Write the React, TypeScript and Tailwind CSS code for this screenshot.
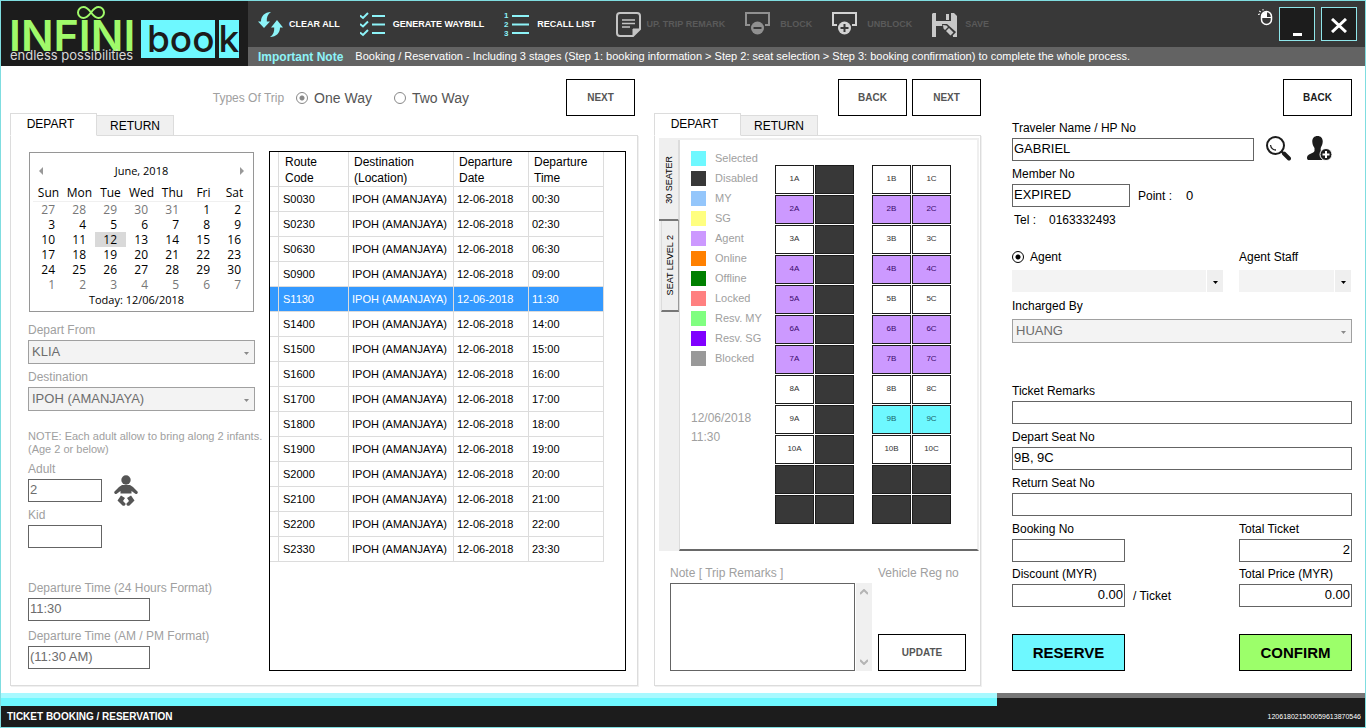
import { useState } from "react";
import type { ReactNode } from "react";
import clsx from "clsx";

const routes = [
  ["S0030", "00:30"],
  ["S0230", "02:30"],
  ["S0630", "06:30"],
  ["S0900", "09:00"],
  ["S1130", "11:30"],
  ["S1400", "14:00"],
  ["S1500", "15:00"],
  ["S1600", "16:00"],
  ["S1700", "17:00"],
  ["S1800", "18:00"],
  ["S1900", "19:00"],
  ["S2000", "20:00"],
  ["S2100", "21:00"],
  ["S2200", "22:00"],
  ["S2330", "23:30"],
];

const legend = [
  { label: "Selected", color: "bg-[#6ef8ff]" },
  { label: "Disabled", color: "bg-[#383838]" },
  { label: "MY", color: "bg-[#94c6fb]" },
  { label: "SG", color: "bg-[#ffff80]" },
  { label: "Agent", color: "bg-[#cc99ff]" },
  { label: "Online", color: "bg-[#ff8000]" },
  { label: "Offline", color: "bg-[#008000]" },
  { label: "Locked", color: "bg-[#ff8080]" },
  { label: "Resv. MY", color: "bg-[#80ff80]" },
  { label: "Resv. SG", color: "bg-[#8000ff]" },
  { label: "Blocked", color: "bg-[#999999]" },
];

const weekDays = ["Sun", "Mon", "Tue", "Wed", "Thu", "Fri", "Sat"];
const weeks = [
  [27, 28, 29, 30, 31, 1, 2],
  [3, 4, 5, 6, 7, 8, 9],
  [10, 11, 12, 13, 14, 15, 16],
  [17, 18, 19, 20, 21, 22, 23],
  [24, 25, 26, 27, 28, 29, 30],
  [1, 2, 3, 4, 5, 6, 7],
];

const agentRows = [2, 4, 6, 7];
const agentSeats = ["5A"];

/* ---------- icons ---------- */

function RefreshIcon() {
  return (
    <svg width="25" height="25" viewBox="0 0 25 25" fill="#8df3f8">
      <path d="M13 0C6.500 0.300 3 4 3 9.500H0l6 6.500 6-6.500H8.800C8.500 5.500 9.700 2 13 0z" />
      <path d="M12 25c6.500-.3 10-4 10-9.500h3L19 8l-6 7.500h3.200C16.500 19.500 15.300 23 12 25z" />
    </svg>
  );
}

function CheckListIcon() {
  return (
    <svg width="25" height="25" viewBox="0 0 25 25" fill="none" stroke="#8df3f8" strokeWidth="2">
      <path d="M0 3.500l3 2.500L8 1M0 12l3 2.500L8 9.500M0 20.500l3 2.500L8 18" />
      <path d="M12 4h13M12 12.500h13M12 21h13" />
    </svg>
  );
}

function NumberListIcon() {
  return (
    <svg width="25" height="25" viewBox="0 0 25 25">
      <path d="M8 4h17M8 12.500h17M8 21h17" stroke="#8df3f8" strokeWidth="2" />
      <g fill="#8df3f8" fontFamily="Liberation Sans" fontSize="8" fontWeight="700">
        <text x="0" y="6">1</text>
        <text x="0" y="15">2</text>
        <text x="0" y="24">3</text>
      </g>
    </svg>
  );
}

function NoteIcon() {
  return (
    <svg width="25" height="25" viewBox="0 0 25 25" fill="none" stroke="#c4c4c4" strokeWidth="2">
      <path d="M4 1h17a3 3 0 0 1 3 3v13l-7 7H4a3 3 0 0 1-3-3V4a3 3 0 0 1 3-3z" />
      <path d="M17 24v-7h7z" fill="#c4c4c4" strokeWidth="1" />
      <path d="M6 8h13M6 11.500h13M6 15h8" strokeWidth="1.500" />
    </svg>
  );
}

function SeatIcon({ plus }: { plus?: boolean }) {
  const color = plus ? "#d2d2d2" : "#909090";
  return (
    <svg width="25" height="25" viewBox="0 0 25 25" fill="none">
      <path d="M5 13H1V1h23v12h-4" stroke={color} strokeWidth="2" />
      <circle cx="12.500" cy="16" r="6.500" fill={color} />
      <path d={plus ? "M8.500 16h8M12.500 12v8" : "M8.500 16h8"} stroke="#383838" strokeWidth="2" />
    </svg>
  );
}

function SaveIcon() {
  return (
    <svg width="25" height="25" viewBox="0 0 25 25">
      <path d="M1 1h21l3 3v21H0V2z" fill="#c8c8c8" />
      <path d="M4 1h15v8H4zM4 14h9l8 8v3H4z" fill="#383838" />
      <path d="M14 2h3v6h-3z" fill="#c8c8c8" />
      <path d="M10 12l5 0 9 8-4 5-9-8z" fill="#383838" />
      <path d="M11 13l3.500.5 1.500 1.500-3 3-1.500-1.500zM17 16l4.500 4.500-3 3L14 19zM22.500 21.500l1 3-3-.5z" fill="#c8c8c8" />
    </svg>
  );
}

function MouseIcon() {
  return (
    <svg width="15" height="17" viewBox="0 0 15 17" fill="none" stroke="#fff">
      <rect x="3.500" y="2.500" width="10" height="13" rx="5" strokeWidth="1.500" />
      <path d="M3.500 8.500h10M8.500 2.500v6" />
      <path d="M4 8V6a4 4 0 0 1 4-3v5z" fill="#fff" stroke="none" />
      <path d="M0 5.500l2-.5M1 2l2 1M5 0v1.500" />
    </svg>
  );
}

function BabyIcon() {
  return (
    <svg width="24" height="31" viewBox="0 0 24 31" fill="#555">
      <circle cx="12" cy="5" r="4.700" />
      <path d="M8 10h8l3 2 4.500 4.500c1 1.500-.8 3.200-2.200 2.200L17.500 16v2.500h-11V16L2.700 18.700C1.300 19.700-.5 18 .5 16.500L5 12z" />
      <path d="M7 20.500l4 2.500-2 3 2.500 2.500c.4 1.800-1.500 3-3 2L3.500 25.500z" />
      <path d="M17 20.500l-4 2.500 2 3-2.500 2.500c-.4 1.800 1.500 3 3 2l5-5z" />
    </svg>
  );
}

function SearchIcon() {
  return (
    <svg width="25" height="25" viewBox="0 0 25 25" fill="none" stroke="#1c1c1c">
      <circle cx="9.500" cy="9.500" r="8.500" strokeWidth="2" />
      <path d="M4.500 9c.5 3 2.500 5 5.500 5" strokeWidth="1.300" />
      <path d="M15.500 15.500l2.500 2.500" strokeWidth="2" />
      <path d="M18 17.500l5 5" strokeWidth="4" strokeLinecap="round" />
    </svg>
  );
}

function AddUserIcon() {
  return (
    <svg width="25" height="25" viewBox="0 0 25 25" fill="#1c1c1c">
      <path d="M10.500 0c3.500 0 5.500 2.500 5.200 6-.2 3-1.400 4.500-2 6v3c1 1.500 5 2 5 5v4H1c-1.500-1-1.500-4 1-5.500 3-1.500 5-1.800 5.500-3.500v-3C6.500 10.500 5.500 9 5.300 6 5 2.500 7 0 10.500 0z" />
      <circle cx="19" cy="18.500" r="6" stroke="#fff" strokeWidth="1" />
      <path d="M15.500 18.500h7M19 15v7" stroke="#fff" strokeWidth="2" />
    </svg>
  );
}

/* ---------- small shared parts ---------- */

function ToolButton({ icon, label, disabled, className = "gap-2" }: { icon: ReactNode; label: string; disabled?: boolean; className?: string }) {
  return (
    <button
      disabled={disabled}
      className={clsx(
        "flex items-center whitespace-nowrap text-[9px] font-bold",
        disabled ? "text-[#5a5a5a]" : "text-white",
        className
      )}
    >
      {icon}
      {label}
    </button>
  );
}

function NavButton({ children, dark }: { children: ReactNode; dark?: boolean }) {
  return (
    <button
      className={clsx(
        "h-[37px] w-[69px] border border-black bg-white text-[10px] font-bold",
        dark ? "text-[#1c1c1c]" : "text-[#555]"
      )}
    >
      {children}
    </button>
  );
}

function Tabs() {
  const [tab, setTab] = useState("DEPART");
  return (
    <div role="tablist" className="relative z-10 -mt-[3px] -mb-px flex items-end text-xs">
      {["DEPART", "RETURN"].map((name) => (
        <button
          key={name}
          role="tab"
          aria-selected={tab === name}
          onClick={() => setTab(name)}
          className={clsx(
            "border border-[#dcdcdc]",
            tab === name ? "h-[23px] w-[87px] border-b-white bg-white pb-0.5 pr-1.5" : "h-[21px] w-[77px] border-l-0 bg-[#f0f0f0]"
          )}
        >
          {name}
        </button>
      ))}
    </div>
  );
}

type FieldProps = {
  id: string;
  label: string;
  value?: string;
  right?: boolean;
  muted?: boolean;
  className?: string;
};

function Field({ id, label, value = "", right, muted, className }: FieldProps) {
  return (
    <div className={clsx("flex flex-col", className)}>
      <label htmlFor={id} className={clsx("mb-0.5 whitespace-nowrap leading-4", muted && "text-[#a0a0a0]")}>
        {label}
      </label>
      <input
        id={id}
        defaultValue={value}
        className={clsx(
          "h-[23px] w-full border border-[#646464] bg-white px-px pb-0.5 text-[13px]",
          right && "text-right",
          muted && "text-[#6d6d6d]"
        )}
      />
    </div>
  );
}

function Arrow({ className }: { className?: string }) {
  return (
    <svg width="5" height="3" viewBox="0 0 5 3" className={clsx("pointer-events-none absolute top-1/2", className)}>
      <path d="M0 0h5L2.500 3z" fill="currentColor" />
    </svg>
  );
}

// greyed out drop-down with a frame
function DisabledSelect({ id, label, value, className }: { id: string; label: ReactNode; value: string; className?: string }) {
  return (
    <div className={clsx("flex flex-col", className)}>
      <label htmlFor={id} className="leading-4">{label}</label>
      <div className="relative">
        <select
          id={id}
          disabled
          className="block h-6 w-full appearance-none border border-[#a0a0a0] bg-[#f3f3f3] px-[3px] text-[13px] text-[#6d6d6d] opacity-100"
        >
          <option>{value}</option>
        </select>
        <Arrow className="right-1.5 text-[#8a8a8a]" />
      </div>
    </div>
  );
}

function FlatSelect({ id }: { id: string }) {
  return (
    <div className="relative flex">
      <select id={id} className="h-[22px] w-full appearance-none bg-[#f3f3f3] text-[13px]">
        <option></option>
      </select>
      <span className="pointer-events-none absolute inset-y-0 right-0 w-[17px] border-l border-white bg-[#efefef]" />
      <Arrow className="right-[5px] text-black" />
    </div>
  );
}

const radioClass =
  "size-3 shrink-0 appearance-none rounded-full border border-current checked:bg-[radial-gradient(circle,currentColor_0_2px,transparent_3px)]";

/* ---------- page sections ---------- */

function Logo() {
  return (
    <div className="relative flex h-[65px] w-[247px] shrink-0 items-start bg-[#1c1c1c] pl-2 pt-[19px]">
      <svg width="28" height="13" viewBox="0 0 28 13" className="absolute left-[76px] top-[5px]" fill="none" stroke="#a0fa6a" strokeWidth="2">
        <path d="M14 6.500C11 2.500 9 1 6.500 1a5.500 5.500 0 0 0 0 11C9 12 11 10.500 14 6.500S19 1 21.500 1a5.500 5.500 0 0 1 0 11C19 12 17 10.500 14 6.500z" />
      </svg>
      <div className="w-[132px] whitespace-nowrap font-[Inter]">
        <div className="h-[30px] text-[43px] font-semibold leading-[30px] text-[#a0fa6a]">INFINI</div>
        <div className="pl-px text-[13px] leading-[10px] text-[#d8d8d8]">endless possibilities</div>
      </div>
      <div className="flex gap-1 font-[Inter] text-[37px] leading-[38px] text-[#1c1c1c]">
        <span className="h-[38px] bg-[#6ef8ff] pl-1.5 font-medium">boo</span>
        <span className="h-[38px] bg-[#6ef8ff] font-medium">k</span>
      </div>
    </div>
  );
}

function Header() {
  return (
    <header className="flex bg-[#383838]">
      <Logo />
      <div className="flex min-w-0 flex-1 flex-col">
        <div className="flex h-[46px] justify-between pr-2">
          <div className="flex items-center gap-5 pl-2.5">
            <ToolButton icon={<RefreshIcon />} label="CLEAR ALL" className="gap-1.5" />
            <ToolButton icon={<CheckListIcon />} label="GENERATE WAYBILL" />
            <ToolButton icon={<NumberListIcon />} label="RECALL LIST" />
            <ToolButton icon={<NoteIcon />} label="UP. TRIP REMARK" disabled className="gap-1.5" />
            <ToolButton icon={<SeatIcon />} label="BLOCK" disabled className="gap-2.5" />
            <ToolButton icon={<SeatIcon plus />} label="UNBLOCK" disabled className="gap-2.5" />
            <ToolButton icon={<SaveIcon />} label="SAVE" disabled />
          </div>
          <div className="flex gap-1.5 pt-1.5">
            <div className="pt-0.5"><MouseIcon /></div>
            <button aria-label="Minimize" className="flex h-[34px] w-9 items-end justify-center border border-[#8fe6ea] bg-[#1c1c1c] pb-1">
              <span className="h-[3px] w-[9px] bg-white" />
            </button>
            <button aria-label="Close" className="flex h-[34px] w-9 items-end justify-center border border-[#8fe6ea] bg-[#1c1c1c] pb-[7px]">
              <svg width="16" height="15" viewBox="0 0 16 15" stroke="#fff" strokeWidth="3">
                <path d="M1 1l14 13M15 1L1 14" />
              </svg>
            </button>
          </div>
        </div>
        <div className="flex h-[19px] items-center gap-3 whitespace-nowrap bg-[#636363] pl-2.5">
          <span className="text-xs font-bold text-[#8df3f8]">Important Note</span>
          <span className="text-[11px] text-white">
            Booking / Reservation - Including 3 stages (Step 1: booking information &gt; Step 2: seat selection &gt; Step 3: booking confirmation) to complete the whole process.
          </span>
        </div>
      </div>
    </header>
  );
}

function Calendar() {
  return (
    <div className="ml-px flex h-[160px] w-[225px] flex-col border border-[#969696] px-[3px] pt-2.5 font-['Open_Sans'] text-[11px]">
      <div className="flex h-4 items-center justify-between px-1.5 leading-4">
        <button aria-label="Previous month">
          <svg width="4" height="8" viewBox="0 0 4 8"><path d="M4 0v8L0 4z" fill="#999" /></svg>
        </button>
        <span>June, 2018</span>
        <button aria-label="Next month">
          <svg width="4" height="8" viewBox="0 0 4 8"><path d="M0 0v8l4-4z" fill="#999" /></svg>
        </button>
      </div>
      <table className="mt-1.5 w-[217px] table-fixed text-xs">
        <thead>
          <tr className="h-4 border-b border-[#f0f0f0] leading-4">
            {weekDays.map((d) => (
              <th key={d} className="p-0 font-normal">{d}</th>
            ))}
          </tr>
        </thead>
        <tbody>
          {weeks.map((week, i) => (
            <tr key={i} className="leading-[15px]">
              {week.map((day, j) => {
                const outside = (i === 0 && day > 20) || i === 5;
                return (
                  <td key={j} className="p-0">
                    <button
                      className={clsx(
                        "block h-[15px] w-full pr-[9px] text-right",
                        outside && "text-[#777]",
                        i === 2 && day === 12 && "bg-[#d9d9d9]"
                      )}
                    >
                      {day}
                    </button>
                  </td>
                );
              })}
            </tr>
          ))}
        </tbody>
      </table>
      <div className="pr-2.5 text-center leading-4">Today: 12/06/2018</div>
    </div>
  );
}

function RouteTable() {
  const [selected, setSelected] = useState("S1130");
  const cell = "border-b border-r border-[#dcdcdc] py-0 pr-0";
  return (
    <div className="min-w-0 flex-1 border border-black">
      <table className="w-[334px] table-fixed border-separate border-spacing-0 text-left">
        <colgroup>
          <col className="w-[9px]" />
          <col className="w-[70px]" />
          <col className="w-[105px]" />
          <col className="w-[75px]" />
          <col className="w-[75px]" />
        </colgroup>
        <thead>
          <tr className="h-[35px] leading-4">
            <th className={cell} />
            <th className={clsx(cell, "pl-1.5 pt-px font-normal")}>Route<br />Code</th>
            <th className={clsx(cell, "pl-[5px] pt-px font-normal")}>Destination<br />(Location)</th>
            <th className={clsx(cell, "pl-[5px] pt-px font-normal")}>Departure<br />Date</th>
            <th className={clsx(cell, "pl-[5px] pt-px font-normal")}>Departure<br />Time</th>
          </tr>
        </thead>
        <tbody>
          {routes.map(([code, time]) => (
            <tr
              key={code}
              onClick={() => setSelected(code)}
              className={clsx("h-[25px] text-[11px]", code === selected && "bg-[#3399ff] text-white")}
            >
              <td className={cell} />
              <td className={clsx(cell, "pl-1")}>{code}</td>
              <td className={clsx(cell, "whitespace-nowrap pl-[3px]")}>IPOH (AMANJAYA)</td>
              <td className={clsx(cell, "pl-[3px]")}>12-06-2018</td>
              <td className={clsx(cell, "pl-[3px]")}>{time}</td>
            </tr>
          ))}
        </tbody>
      </table>
    </div>
  );
}

function TripPanel() {
  return (
    <section className="flex min-w-0 flex-col">
      <div className="flex items-start justify-end pr-[3px]">
        <div className="mr-[97px] flex h-[37px] items-center text-sm text-[#555]">
          <span className="mr-3 text-xs text-[#a0a0a0]">Types Of Trip</span>
          <label className="mr-[22px] flex items-center gap-1.5">
            <input type="radio" name="trip" defaultChecked className={clsx(radioClass, "text-[#888]")} />
            One Way
          </label>
          <label className="flex items-center gap-1.5">
            <input type="radio" name="trip" className={clsx(radioClass, "text-[#888]")} />
            Two Way
          </label>
        </div>
        <NavButton>NEXT</NavButton>
      </div>
      <Tabs />
      <div className="flex flex-1 gap-3.5 border border-[#dcdcdc] pb-3.5 pl-[17px] pr-[11px] pt-[15px] shadow-[1px_1px_0_#f0f0f0]">
        <div className="flex w-[227px] shrink-0 flex-col pt-px">
          <Calendar />
          <DisabledSelect id="from" label={<span className="text-[#a0a0a0]">Depart From</span>} value="KLIA" className="mt-2.5 gap-0.5" />
          <DisabledSelect id="to" label={<span className="text-[#a0a0a0]">Destination</span>} value="IPOH (AMANJAYA)" className="mt-[5px] gap-0.5" />
          <p className="mt-[19px] whitespace-nowrap text-[11px] leading-[13px] text-[#a0a0a0]">
            NOTE: Each adult allow to bring along 2 infants.
            <br />
            (Age 2 or below)
          </p>
          <div className="mt-[5px] flex items-end gap-3">
            <Field id="adult" label="Adult" value="2" muted className="w-[74px]" />
            <div className="-mb-1"><BabyIcon /></div>
          </div>
          <Field id="kid" label="Kid" muted className="mt-[5px] w-[74px]" />
          <Field id="time24" label="Departure Time (24 Hours Format)" value="11:30" muted className="mt-8 w-[122px]" />
          <Field id="time12" label="Departure Time (AM / PM Format)" value="(11:30 AM)" muted className="mt-[7px] w-[122px]" />
        </div>
        <RouteTable />
      </div>
    </section>
  );
}

function Seat({ name, initial }: { name?: string; initial?: "agent" | "selected" }) {
  if (!name) {
    return <button disabled aria-label="Disabled seat" className="h-[29px] w-[39px] border border-[#1c1c1c] bg-[#383838]" />;
  }
  return (
    <button
      className={clsx(
        "h-[29px] w-[39px] border border-[#1c1c1c] text-[8px]",
        initial === "agent" && "bg-[#cc99ff] text-[#3b0a6b]",
        initial === "selected" && "bg-[#6ef8ff] text-[#1a6468]",
        !initial && "bg-white text-[#333]"
      )}
    >
      {name}
    </button>
  );
}

function SeatMap() {
  return (
    <div className="flex flex-col gap-px">
      {Array.from({ length: 12 }, (_, i) => {
        const row = i + 1;
        const real = row <= 10;
        const rowState = agentRows.includes(row) ? "agent" : undefined;
        return (
          <div key={row} className="flex gap-px">
            <Seat name={real ? `${row}A` : undefined} initial={agentSeats.includes(`${row}A`) ? "agent" : rowState} />
            <Seat />
            <span className="w-4" />
            <Seat name={real ? `${row}B` : undefined} initial={row === 9 ? "selected" : rowState} />
            <Seat name={real ? `${row}C` : undefined} initial={row === 9 ? "selected" : rowState} />
          </div>
        );
      })}
    </div>
  );
}

function SeatPanel() {
  return (
    <section className="flex min-w-0 flex-col">
      <div className="flex justify-end gap-[5px]">
        <NavButton>BACK</NavButton>
        <NavButton>NEXT</NavButton>
      </div>
      <Tabs />
      <div className="flex flex-1 flex-col border border-[#dcdcdc] pb-3.5 shadow-[1px_1px_0_#f0f0f0]">
        <div className="ml-1 mr-px mt-0.5 flex bg-[#efefef] pt-0.5">
          <div className="flex w-5 flex-col items-end text-[9px]">
            <button className="flex h-[81px] w-5 items-center justify-center border-b-2 border-r border-b-[#777] border-r-[#dcdcdc]">
              <span className="rotate-180 whitespace-nowrap [writing-mode:vertical-rl]">30 SEATER</span>
            </button>
            <button className="flex h-[91px] w-[18px] items-center justify-center border-b-2 border-l border-r border-b-[#777] border-l-[#dcdcdc] border-r-[#999]">
              <span className="rotate-180 whitespace-nowrap [writing-mode:vertical-rl]">SEAT LEVEL 2</span>
            </button>
          </div>
          <div className="flex flex-1 border-b-2 border-l border-r-2 border-b-[#696969] border-l-[#dcdcdc] border-r-[#efefef] bg-white pl-[11px] pt-[11px]">
            <div className="w-[84px] text-[#a0a0a0]">
              <ul className="flex flex-col gap-[5px]">
                {legend.map((l) => (
                  <li key={l.label} className="flex h-[15px] items-center gap-[9px] whitespace-nowrap text-[11px]">
                    <span className={clsx("size-[15px]", l.color)} />
                    {l.label}
                  </li>
                ))}
              </ul>
              <div className="mt-[43px] leading-[19px]">
                12/06/2018
                <br />
                11:30
              </div>
            </div>
            <div className="pb-[25px] pt-3.5"><SeatMap /></div>
          </div>
        </div>
        <div className="flex flex-1 gap-1.5 pl-[15px] pr-3.5 pt-3.5">
          <div className="flex flex-1 flex-col gap-0.5">
            <label htmlFor="remarks" className="leading-4 text-[#a0a0a0]">Note [ Trip Remarks ]</label>
            <div className="flex flex-1">
              <textarea id="remarks" className="h-[88px] min-w-0 flex-1 resize-none border border-[#646464] p-1 text-[13px]" />
              <div className="ml-px flex h-[88px] w-4 flex-col items-center justify-between bg-[#f0f0f0] py-1.5">
                <button aria-label="Scroll up">
                  <svg width="8" height="6" viewBox="0 0 8 6" fill="none" stroke="#b4b4b4" strokeWidth="2"><path d="M0 5l4-4 4 4" /></svg>
                </button>
                <button aria-label="Scroll down">
                  <svg width="8" height="6" viewBox="0 0 8 6" fill="none" stroke="#b4b4b4" strokeWidth="2"><path d="M0 1l4 4 4-4" /></svg>
                </button>
              </div>
            </div>
          </div>
          <div className="flex w-[89px] flex-col justify-between">
            <span className="whitespace-nowrap leading-4 text-[#a0a0a0]">Vehicle Reg no</span>
            <button className="h-[37px] border border-black bg-white text-[10px] font-bold text-[#555]">UPDATE</button>
          </div>
        </div>
      </div>
    </section>
  );
}

function BookingForm() {
  return (
    <section className="flex min-w-0 flex-col pl-[15px]">
      <div className="flex justify-end">
        <NavButton dark>BACK</NavButton>
      </div>
      <div className="mt-1 flex items-end">
        <Field id="traveler" label="Traveler Name / HP No" value="GABRIEL" className="mr-3 flex-1" />
        <button aria-label="Search traveler" className="mr-4"><SearchIcon /></button>
        <button aria-label="Add traveler" className="mr-5"><AddUserIcon /></button>
      </div>
      <div className="mt-[5px] flex items-end">
        <Field id="member" label="Member No" value="EXPIRED" className="w-[118px]" />
        <span className="ml-2 w-12 leading-[22px]">Point :</span>
        <span className="text-[13px] leading-[22px]">0</span>
      </div>
      <div className="mt-[5px] flex gap-[13px] pl-0.5 leading-4">
        <span>Tel :</span>
        <span>0163332493</span>
      </div>
      <div className="mt-[21px] flex gap-4 pr-px leading-4">
        <div className="flex flex-1 flex-col gap-[5px]">
          <label className="flex items-center gap-1.5">
            <input type="radio" name="agent" defaultChecked className={radioClass} />
            Agent
          </label>
          <FlatSelect id="agent-list" />
        </div>
        <div className="flex w-28 flex-col gap-[5px]">
          <label htmlFor="staff">Agent Staff</label>
          <FlatSelect id="staff" />
        </div>
      </div>
      <DisabledSelect id="incharge" label="Incharged By" value="HUANG" className="mt-1.5 gap-[5px]" />
      <Field id="ticket-remarks" label="Ticket Remarks" className="mt-10" />
      <Field id="depart-seat" label="Depart Seat No" value="9B, 9C" className="mt-[5px]" />
      <Field id="return-seat" label="Return Seat No" className="mt-[5px]" />
      <div className="mt-[5px] flex justify-between">
        <Field id="booking-no" label="Booking No" className="w-[113px]" />
        <Field id="total-ticket" label="Total Ticket" value="2" right className="w-[113px]" />
      </div>
      <div className="mt-1 flex items-end">
        <Field id="discount" label="Discount (MYR)" value="0.00" right className="w-[113px]" />
        <span className="ml-2 leading-[22px]">/ Ticket</span>
        <Field id="total-price" label="Total Price (MYR)" value="0.00" right className="ml-auto w-[113px]" />
      </div>
      <div className="mt-[27px] flex justify-between text-[15px] font-bold">
        <button className="h-[37px] w-[113px] border border-black bg-[#6ef8ff]">RESERVE</button>
        <button className="h-[37px] w-[113px] border border-black bg-[#9cff6a]">CONFIRM</button>
      </div>
    </section>
  );
}

export default function App() {
  return (
    <div className="flex min-h-screen flex-col border border-[#7fdde0] bg-white font-['Liberation_Sans',Arial,sans-serif] text-xs text-black">
      <Header />
      <main className="grid flex-1 grid-cols-[628fr_327fr_355fr] gap-4 pb-[7px] pl-[9px] pr-[13px] pt-[13px]">
        <TripPanel />
        <SeatPanel />
        <BookingForm />
      </main>
      <footer className="bg-[#1c1c1c] text-white">
        <div className="h-[13px] border-t-[5px] border-[#777]">
          <div className="-mt-[5px] h-[13px] w-[73%] border-t-[5px] border-[#a8f9ff] bg-[#6ef8ff]" />
        </div>
        <div className="flex h-[21px] items-center justify-between pl-1.5 pr-1">
          <span className="text-[10px] font-bold">TICKET BOOKING / RESERVATION</span>
          <span className="text-[7px]">120618021500059613870546</span>
        </div>
      </footer>
    </div>
  );
}
